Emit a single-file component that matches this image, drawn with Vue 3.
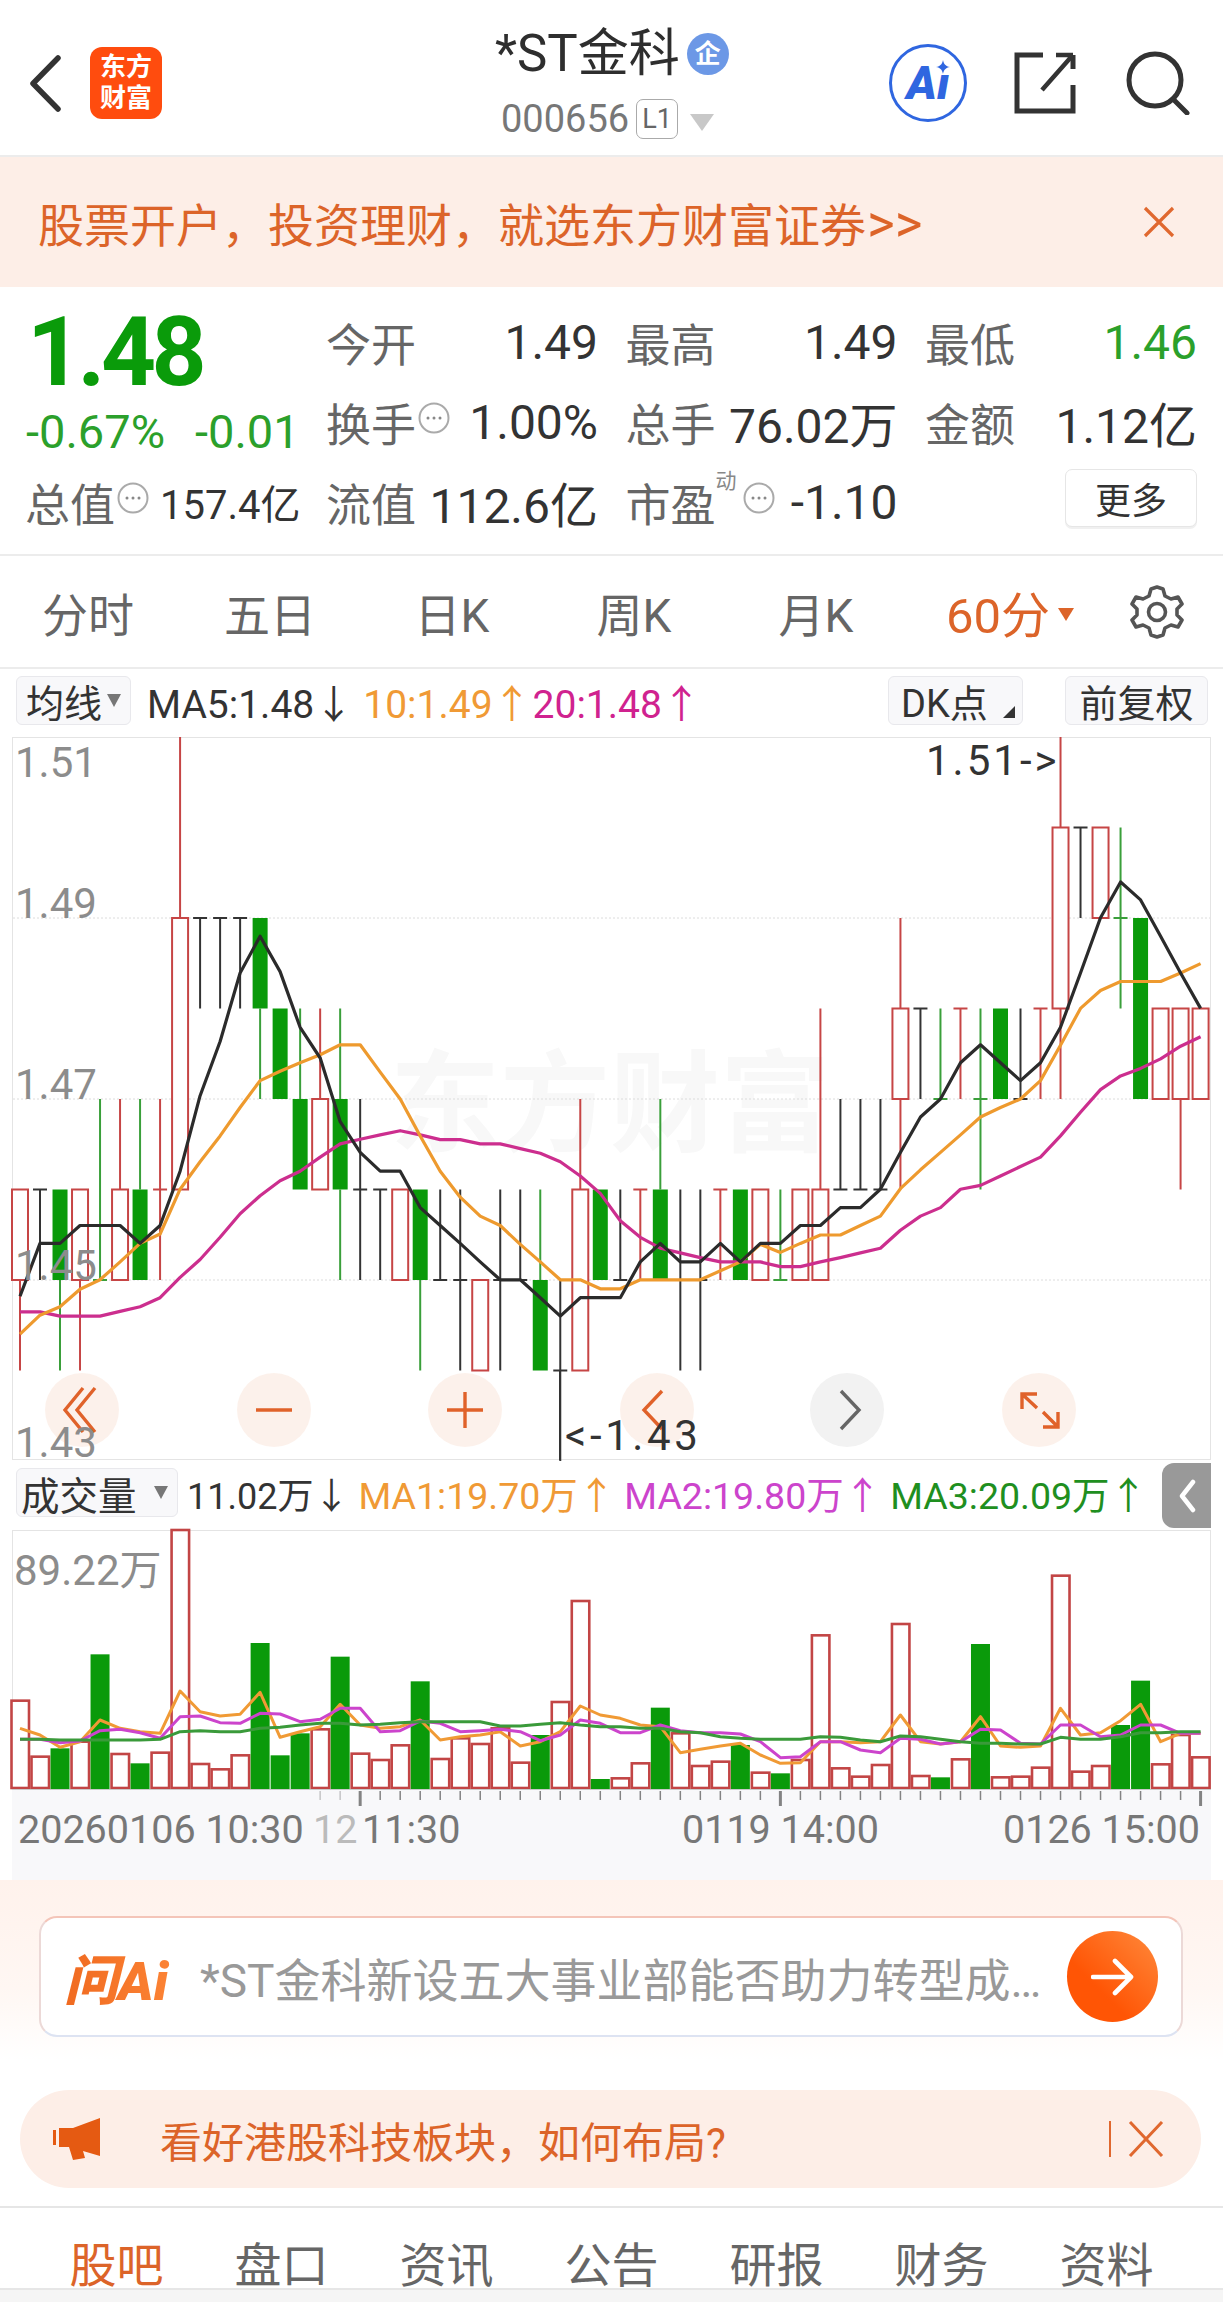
<script setup>
const Y0 = 918, PX = 9050
const py = p => Y0 + (1.49 - p) * PX
const cx = i => 20 + i * 20.01
const ya = z => 730 + z / 2.119
const yv = z => 1460 + z / 3

// bodies: kind, top, bottom, high, low — dojis: colour, dash level, high, low
const raw = [
  ['r',1.46,1.45,1.46,1.44],['dk',1.46,1.46,1.45],['g',1.46,1.45,1.46,1.44],['r',1.46,1.45,1.46,1.44],
  ['dg',1.45,1.47,1.45],['r',1.46,1.45,1.47,1.45],['g',1.46,1.45,1.47,1.45],['dr',1.46,1.47,1.45],
  ['r',1.49,1.46,1.51,1.46],['dk',1.49,1.49,1.48],['dk',1.49,1.49,1.48],['dk',1.49,1.49,1.48],
  ['g',1.49,1.48,1.49,1.47],['g',1.48,1.47,1.48,1.47],['g',1.47,1.46,1.48,1.46],['r',1.47,1.46,1.48,1.46],
  ['g',1.47,1.46,1.48,1.45],['dk',1.46,1.47,1.45],['dk',1.46,1.46,1.45],['r',1.46,1.45,1.46,1.45],
  ['g',1.46,1.45,1.46,1.44],['dk',1.45,1.46,1.45],['dk',1.45,1.46,1.44],['r',1.45,1.44,1.45,1.44],
  ['dk',1.45,1.46,1.44],['dk',1.45,1.46,1.45],['g',1.45,1.44,1.46,1.44],['dk',1.44,1.45,1.43],
  ['r',1.46,1.44,1.47,1.44],['g',1.46,1.45,1.46,1.45],['dk',1.45,1.46,1.45],['dr',1.46,1.46,1.45],
  ['g',1.46,1.45,1.47,1.45],['dk',1.45,1.46,1.44],['dk',1.45,1.46,1.44],['dr',1.46,1.46,1.45],
  ['g',1.46,1.45,1.46,1.45],['r',1.46,1.45,1.46,1.45],['dg',1.45,1.46,1.45],['r',1.46,1.45,1.46,1.45],
  ['r',1.46,1.45,1.48,1.45],['dk',1.46,1.47,1.46],['dk',1.46,1.47,1.46],['dk',1.46,1.47,1.46],
  ['r',1.48,1.47,1.49,1.46],['dk',1.48,1.48,1.47],['dg',1.47,1.48,1.47],['dr',1.48,1.48,1.47],
  ['dg',1.47,1.48,1.46],['g',1.48,1.47,1.48,1.47],['dk',1.47,1.48,1.47],['dr',1.48,1.48,1.47],
  ['r',1.50,1.48,1.51,1.47],['dk',1.50,1.50,1.49],['r',1.50,1.49,1.50,1.49],['dg',1.49,1.50,1.48],
  ['g',1.49,1.47,1.49,1.47],['r',1.48,1.47,1.48,1.47],['r',1.48,1.47,1.48,1.46],['r',1.48,1.47,1.48,1.47]
]
const colors = { dk: '#333333', dg: '#3a9f3a', dr: '#c64545' }
const candles = raw.map((c, i) => {
  const x = cx(i)
  if (c[0] === 'r' || c[0] === 'g') {
    return { i, x, kind: c[0], top: py(c[1]), bot: py(c[2]), high: py(c[3]), low: py(c[4]), stroke: c[0] === 'r' ? '#c64545' : '#3a9f3a' }
  }
  return { i, x, kind: 'd', dash: py(c[1]), high: py(c[2]), low: py(c[3]), stroke: colors[c[0]] }
})

const ma5 = [1200,1088,1088,1050,1050,1050,1088,1050,935,775,660,515,437,512,630,695,830,895,935,935,1012,1050,1088,1127,1165,1165,1203,1242,1203,1203,1203,1127,1088,1127,1127,1088,1127,1088,1088,1050,1050,1012,1012,973,895,820,782,705,667,705,743,705,630,515,398,322,360,437,515,590]
const ma10 = [1280,1240,1222,1185,1165,1127,1088,1068,973,915,860,800,743,723,705,688,667,667,725,782,860,935,990,1030,1050,1090,1127,1165,1165,1184,1184,1165,1165,1165,1165,1146,1127,1090,1107,1088,1070,1070,1050,1030,972,932,895,858,820,800,782,743,668,590,552,533,533,533,515,495]
const ma20 = [1233,1233,1242,1242,1242,1232,1222,1203,1160,1122,1075,1025,987,955,935,905,877,867,858,849,858,868,868,877,877,887,897,915,945,982,1040,1075,1098,1108,1118,1127,1127,1127,1137,1137,1127,1118,1108,1098,1060,1030,1012,973,965,945,925,905,860,810,762,733,717,697,670,650]
const pts = (arr, fy) => arr.map((z, i) => `${cx(i).toFixed(1)},${fy(z).toFixed(1)}`).join(' ')
const priceLines = [
  { c: '#cc2e8e', p: pts(ma20, ya) },
  { c: '#ee9a2e', p: pts(ma10, ya) },
  { c: '#2b2b2b', p: pts(ma5, ya) }
]

const volTop = [722,890,865,845,583,882,910,878,210,912,928,886,549,886,820,808,590,881,900,856,664,897,835,852,805,908,825,726,423,957,955,910,743,820,918,905,855,938,940,900,526,925,950,915,492,948,952,898,552,952,950,923,347,935,918,795,662,913,825,892]
const volGreen = new Set([2,4,6,12,13,14,16,20,26,29,32,36,38,46,48,55,56])
const vols = volTop.map((z, i) => ({ i, x: cx(i), y: yv(z), green: volGreen.has(i) }))
const vm1 = [805,825,862,845,780,805,815,820,693,755,768,763,697,832,815,800,733,795,805,800,780,840,830,825,815,858,845,815,738,765,775,795,800,878,868,858,850,885,910,908,845,845,848,845,765,845,852,845,770,858,862,858,745,825,818,782,733,845,820,820]
const vm2 = [838,838,848,843,812,808,818,835,770,768,788,790,760,762,785,778,745,745,815,812,783,790,815,812,808,815,842,825,780,790,818,818,795,812,818,818,822,845,893,890,845,845,870,878,835,838,852,845,808,810,850,852,795,795,830,825,795,795,820,820]
const vm3 = [838,838,840,840,840,840,840,838,815,812,815,815,805,802,795,790,790,795,793,788,785,785,785,785,798,798,793,788,795,800,800,805,805,815,818,830,835,838,838,838,830,832,840,845,828,830,838,845,850,850,852,852,832,838,838,830,818,818,815,815]
const volLines = [
  { c: '#f09a35', p: pts(vm1, yv) },
  { c: '#cc44cc', p: pts(vm2, yv) },
  { c: '#3a9a3a', p: pts(vm3, yv) }
]

const ticks = Array.from({ length: 45 }, (_, k) => {
  const i = k + 15
  const big = i === 17 || i === 38 || i === 59
  return { i, x: cx(i), h: big ? 15 : 9, w: big ? 3 : 1.5, o: i < 17 ? 0.35 : 0.8 }
})

const gridY = [py(1.49), py(1.47), py(1.45)]
const axis = [
  { t: '1.51', y: 777 }, { t: '1.49', y: 918 }, { t: '1.47', y: 1099 }, { t: '1.45', y: 1280 }, { t: '1.43', y: 1457 }
]
const navX = [82, 274, 465, 657, 1039]

const tabs = ['分时', '五日', '日K', '周K', '月K']
const bottom = ['盘口', '资讯', '公告', '研报', '财务', '资料']
</script>

<template>
  <div class="page">
    <header class="head">
      <svg class="back" viewBox="0 0 33 57"><path d="M29 3 4 28.5 29 54" fill="none" stroke="#333" stroke-width="5.5" stroke-linecap="round" stroke-linejoin="round"/></svg>
      <div class="logo"><span>东方</span><span>财富</span></div>
      <div class="head-c">
        <div class="title">*ST金科<span class="qi">企</span></div>
        <div class="code">000656<span class="l1">L1</span><i class="tri"></i></div>
      </div>
      <div class="head-r">
        <div class="ai">Aı<svg class="star" viewBox="0 0 16 16"><path d="M8 0c1 5 3 7 8 8-5 1-7 3-8 8-1-5-3-7-8-8 5-1 7-3 8-8z" fill="#2f66e0"/></svg></div>
        <svg class="ic-share" viewBox="0 0 62 62"><path d="M29 3H3v56h56V33M59 17V3" fill="none" stroke="#333" stroke-width="5"/><path d="M28 38 58 4M42 3h17" fill="none" stroke="#333" stroke-width="4.5"/></svg>
        <svg class="ic-search" viewBox="0 0 64 64"><circle cx="29" cy="29" r="26" fill="none" stroke="#333" stroke-width="5"/><path d="M47 48 61 62" stroke="#333" stroke-width="5" stroke-linecap="round"/></svg>
      </div>
    </header>

    <div class="banner">
      <span>股票开户，投资理财，就选东方财富证券<b class="gt">&gt;&gt;</b></span>
      <svg class="x" viewBox="0 0 32 32"><path d="M2 2l28 28M30 2 2 30" stroke="#e0682f" stroke-width="3.2"/></svg>
    </div>

    <section class="stats">
      <div class="quote">
        <div class="price">1.48</div>
        <div class="chg"><span>-0.67%</span><span>-0.01</span></div>
        <div class="total">
          <span class="lb">总值</span>
          <svg class="dot" viewBox="0 0 32 32"><circle cx="16" cy="16" r="14.5" fill="none" stroke="#aaa" stroke-width="2"/><path d="M10 16h.01M16 16h.01M22 16h.01" stroke="#888" stroke-width="3" stroke-linecap="round"/></svg>
          <span class="total-v">157.4亿</span>
        </div>
      </div>
      <div class="grid">
        <div class="cell"><span class="lb">今开</span><span class="val">1.49</span></div>
        <div class="cell"><span class="lb">最高</span><span class="val">1.49</span></div>
        <div class="cell"><span class="lb">最低</span><span class="val up">1.46</span></div>
        <div class="cell">
          <span class="lb">换手<svg class="dot" viewBox="0 0 32 32"><circle cx="16" cy="16" r="14.5" fill="none" stroke="#aaa" stroke-width="2"/><path d="M10 16h.01M16 16h.01M22 16h.01" stroke="#888" stroke-width="3" stroke-linecap="round"/></svg></span>
          <span class="val">1.00%</span>
        </div>
        <div class="cell"><span class="lb">总手</span><span class="val">76.02万</span></div>
        <div class="cell"><span class="lb">金额</span><span class="val">1.12亿</span></div>
        <div class="cell"><span class="lb">流值</span><span class="val">112.6亿</span></div>
        <div class="cell">
          <span class="lb">市盈<sup class="sup">动</sup><svg class="dot" viewBox="0 0 32 32"><circle cx="16" cy="16" r="14.5" fill="none" stroke="#aaa" stroke-width="2"/><path d="M10 16h.01M16 16h.01M22 16h.01" stroke="#888" stroke-width="3" stroke-linecap="round"/></svg></span>
          <span class="val">-1.10</span>
        </div>
        <div class="cell end"><button class="more">更多</button></div>
      </div>
    </section>

    <nav class="tabs">
      <span v-for="t in tabs" :key="t" class="tab">{{ t }}</span>
      <span class="tab on">60分<i class="tri-o"></i></span>
      <svg class="gear" viewBox="0 0 54 56">
        <path d="M27 3l6 2 2 7 6 3 7-2 4 7-5 5v6l5 5-4 7-7-2-6 3-2 7-6 2-6-2-2-7-6-3-7 2-4-7 5-5v-6l-5-5 4-7 7 2 6-3 2-7z" fill="none" stroke="#555" stroke-width="3.6" stroke-linejoin="round"/>
        <circle cx="27" cy="28" r="8.5" fill="none" stroke="#555" stroke-width="3.6"/>
      </svg>
    </nav>

    <div class="legend">
      <span class="chip c1">均线<i class="tri-g"></i></span>
      <span class="lg k ma5">MA5:1.48↓</span>
      <span class="lg o ma10">10:1.49↑</span>
      <span class="lg m ma20">20:1.48↑</span>
      <span class="chip c2">DK点<i class="corner"></i></span>
      <span class="chip c3">前复权</span>
    </div>

    <svg class="price-chart" width="1199" height="723" viewBox="12 737 1199 723">
      <rect x="12.5" y="737.5" width="1198" height="722" fill="#fff" stroke="#e4e4e4"/>
      <text x="390" y="1143" class="wm">东方财富</text>
      <line v-for="y in gridY" :key="y" x1="13" x2="1210" :y1="y" :y2="y" stroke="#dcdcdc" stroke-dasharray="2 2"/>
      <g v-for="c in candles" :key="c.i">
        <template v-if="c.kind === 'd'">
          <line :x1="c.x" :x2="c.x" :y1="c.high" :y2="c.low" :stroke="c.stroke" stroke-width="2"/>
          <line :x1="c.x - 7" :x2="c.x + 7" :y1="c.dash" :y2="c.dash" :stroke="c.stroke" stroke-width="2"/>
        </template>
        <template v-else>
          <line :x1="c.x" :x2="c.x" :y1="c.high" :y2="c.top" :stroke="c.stroke" stroke-width="2"/>
          <line :x1="c.x" :x2="c.x" :y1="c.bot" :y2="c.low" :stroke="c.stroke" stroke-width="2"/>
          <rect v-if="c.kind === 'r'" :x="c.x - 8" :y="c.top" width="16" :height="c.bot - c.top" fill="#fff" stroke="#c64545" stroke-width="2"/>
          <rect v-else :x="c.x - 7.5" :y="c.top" width="15" :height="c.bot - c.top" fill="#0a9a0a"/>
        </template>
      </g>
      <polyline v-for="l in priceLines" :key="l.c" :points="l.p" fill="none" :stroke="l.c" stroke-width="3.2" stroke-linejoin="round"/>
      <line x1="560" x2="560" y1="1370" y2="1460" stroke="#333" stroke-width="2"/>
      <circle v-for="x in navX" :key="x" :cx="x" cy="1410" r="37" fill="#fcefe8" fill-opacity="0.88"/>
      <circle cx="847" cy="1410" r="37" fill="#f2f2f2"/>
      <g fill="none" stroke="#e0622a" stroke-width="3.4">
        <path d="M83 1388l-18 22 18 22M95 1388l-18 22 18 22"/>
        <path d="M256 1410h36"/>
        <path d="M447 1410h36M465 1392v36"/>
        <path d="M662 1391l-18 19 18 19"/>
        <path d="M1022 1394l15 14M1037 1394h-15v15M1043 1412l15 15M1043 1427h15v-15"/>
      </g>
      <path d="M841 1391l18 19-18 19" fill="none" stroke="#666" stroke-width="3.4"/>
      <text v-for="a in axis" :key="a.t" x="15" :y="a.y" class="ax">{{ a.t }}</text>
      <text x="565" y="1450" class="mk mk-l">&lt;-1.43</text>
      <text x="926" y="775" class="mk">1.51-&gt;</text>
    </svg>

    <div class="legend vol-lg">
      <span class="chip c4">成交量<i class="tri-g"></i></span>
      <span class="lg k">11.02万↓</span>
      <span class="lg o wide">MA1:19.70万↑</span>
      <span class="lg p wide">MA2:19.80万↑</span>
      <span class="lg g wide">MA3:20.09万↑</span>
      <span class="pull"><svg viewBox="0 0 18 34" width="18" height="34"><path d="M15 3 4 17l11 14" fill="none" stroke="#fff" stroke-width="4.5" stroke-linecap="round" stroke-linejoin="round"/></svg></span>
    </div>

    <svg class="vol-chart" width="1199" height="259" viewBox="12 1530 1199 259">
      <rect x="12.5" y="1530.5" width="1198" height="260" fill="#fff" stroke="#e4e4e4"/>
      <template v-for="v in vols" :key="v.i">
        <rect v-if="v.green" :x="v.x - 9.5" :y="v.y" width="19" :height="1789 - v.y" fill="#0a9a0a"/>
        <rect v-else :x="v.x - 8.5" :y="v.y" width="17.5" :height="1788 - v.y" fill="#fff" stroke="#c24545" stroke-width="2.6"/>
      </template>
      <polyline v-for="l in volLines" :key="l.c" :points="l.p" fill="none" :stroke="l.c" stroke-width="3" stroke-linejoin="round"/>
      <text x="14" y="1585" class="ax vt">89.22万</text>
    </svg>

    <svg class="time" width="1199" height="91" viewBox="12 1789 1199 91">
      <rect x="12" y="1789" width="1199" height="91" fill="#f8f8fa"/>
      <rect x="12" y="1789" width="1199" height="1" fill="#c9c9c9"/>
      <line v-for="t in ticks" :key="t.i" :x1="t.x" :x2="t.x" y1="1791" :y2="1791 + t.h" stroke="#666" :stroke-width="t.w" :opacity="t.o"/>
      <text x="18" y="1843" class="tm">20260106 10:30</text>
      <text x="313" y="1843" class="tm faded">12</text>
      <text x="362" y="1843" class="tm">11:30</text>
      <text x="682" y="1843" class="tm">0119 14:00</text>
      <text x="1003" y="1843" class="tm">0126 15:00</text>
    </svg>

    <section class="ask">
      <div class="ask-card">
        <span class="ask-logo">问Ai</span>
        <span class="ask-text">*ST金科新设五大事业部能否助力转型成…</span>
        <span class="ask-go"><svg viewBox="0 0 44 38" width="44" height="38"><path d="M2 19h38M24 3l16 16-16 16" fill="none" stroke="#fff" stroke-width="4.6" stroke-linecap="round" stroke-linejoin="round"/></svg></span>
      </div>
    </section>

    <section class="notice-wrap">
      <div class="notice">
        <svg class="horn" viewBox="0 0 48 42"><path d="M0 12h3v15H0zM6 10h14L47 0v38L30 33l2 7-12 2-4-13H6z" fill="#e55a12"/></svg>
        <span class="notice-t">看好港股科技板块，如何布局?</span>
        <i class="sep"></i>
        <svg class="x2" viewBox="0 0 36 36"><path d="M2 1l32 34M34 1 2 35" stroke="#e0682f" stroke-width="3"/></svg>
      </div>
    </section>

    <nav class="btabs">
      <span class="bt on">股吧</span>
      <span v-for="b in bottom" :key="b" class="bt">{{ b }}</span>
    </nav>
    <div class="foot"></div>
  </div>
</template>

<style>
html, body { margin: 0; background: #fff; }
</style>

<style scoped>
.page {
  width: 1223px; height: 2302px; overflow: hidden; background: #fff; color: #333;
  font-family: Roboto, "Noto Sans CJK SC", "Noto Sans", sans-serif;
}
.page svg { display: block; }
i { display: inline-block; font-style: normal; }

.head { height: 155px; display: flex; align-items: flex-start; border-bottom: 2px solid #ececec; }
.back { width: 33px; height: 57px; margin: 55px 0 0 29px; flex: none; }
.logo {
  width: 72px; height: 72px; margin: 47px 0 0 28px; border-radius: 12px; background: #ff4c0e; color: #fff;
  display: flex; flex-direction: column; align-items: center; justify-content: center;
  font-size: 26px; line-height: 31px; font-weight: 700; flex: none;
}
.head-c { margin-left: 333px; width: 250px; flex: none; }
.title { margin-top: 26px; height: 56px; font-size: 51px; line-height: 56px; display: flex; align-items: center; white-space: nowrap; color: #2e2e2e; }
.qi {
  width: 42px; height: 42px; margin-left: 7px; border-radius: 50%; background: #6c98e6; color: #fff;
  font-size: 26px; line-height: 42px; text-align: center; font-weight: 700;
}
.code { margin-top: 17px; margin-left: 6px; height: 40px; display: flex; align-items: center; font-size: 38px; color: #777; }
.l1 { margin-left: 7px; width: 40px; height: 38px; border: 1.5px solid #aaa; border-radius: 7px; font-size: 27px; line-height: 38px; text-align: center; color: #666; }
.tri { margin-left: 12px; margin-top: 6px; border: 12px solid transparent; border-top: 17px solid #c8c8c8; border-bottom: 0; }
.head-r { margin-left: auto; display: flex; align-items: center; height: 166px; padding-right: 33px; }
.ai {
  width: 72px; height: 72px; border: 3.5px solid #2f66e0; border-radius: 50%; color: #2f66e0; position: relative;
  font-size: 46px; line-height: 72px; text-align: center; font-weight: 900; font-style: italic;
}
.star { position: absolute; right: 14px; top: 13px; width: 14px; height: 14px; }
.ic-share { width: 62px; height: 62px; margin-left: 47px; }
.ic-search { width: 64px; height: 64px; margin-left: 50px; }

.banner {
  height: 130px; background: #fdeee7; display: flex; align-items: center; justify-content: space-between;
  padding: 0 48px 0 38px; font-size: 46px; color: #dc6429; white-space: nowrap;
}
.gt { font-weight: 400; font-size: 53px; letter-spacing: 0; margin-left: 1px; line-height: 46px; }
.x { width: 32px; height: 32px; }

.stats { height: 269px; display: flex; box-sizing: border-box; padding-top: 15px; border-bottom: 2px solid #ececec; }
.quote { width: 326px; padding-left: 25px; box-sizing: border-box; flex: none; }
.price { height: 100px; font-size: 96px; line-height: 100px; font-weight: 700; color: #0a9b0a; letter-spacing: -4.5px; margin-left: 2px; }
.chg { height: 60px; display: flex; gap: 30px; font-size: 47px; line-height: 60px; color: #2ba02b; white-space: nowrap; margin-left: 1px; }
.total { height: 80px; display: flex; align-items: center; white-space: nowrap; }
.total-v { font-size: 40px; color: #333; margin-left: 11px; }
.lb { font-size: 45px; color: #666; display: inline-flex; align-items: center; white-space: nowrap; position: relative; }
.dot { width: 32px; height: 32px; flex: none; margin-left: 2px; margin-top: -8px; }
.sup { position: absolute; left: 90px; top: 0; font-size: 21px; color: #888; line-height: 22px; }
.sup + .dot { margin-left: 27px; }
.grid { display: grid; grid-template-columns: repeat(3, 272px); grid-auto-rows: 80px; column-gap: 27.5px; }
.cell { display: flex; align-items: center; justify-content: space-between; white-space: nowrap; }
.cell.end { justify-content: flex-end; }
.val { font-size: 48px; color: #333; }
.val.up { color: #2ba02b; }
.more { width: 132px; height: 58px; background: #fff; border: 1.5px solid #e6e6e6; border-radius: 7px; font: inherit; font-size: 36px; color: #333; padding: 0; box-shadow: 0 2px 0 #f0f0f0; margin-top: -8px; }

.tabs { height: 111px; display: flex; align-items: center; border-bottom: 2px solid #ececec; margin-left: -3px; }
.tab { width: 182px; text-align: center; font-size: 46px; color: #666; flex: none; white-space: nowrap; box-sizing: border-box; }
.tab.on { color: #dc6429; font-size: 49px; padding-left: 24px; }
.tri-o { margin-left: 8px; vertical-align: 12px; border: 8px solid transparent; border-top: 13px solid #dc6429; border-bottom: 0; }
.gear { width: 54px; height: 56px; margin-left: 41px; flex: none; }

.legend { height: 68px; display: flex; align-items: center; font-size: 36px; white-space: nowrap; position: relative; padding-bottom: 5px; box-sizing: border-box; }
.chip {
  background: #f8f8fa; border: 1.5px solid #e8e8ec; border-radius: 6px; height: 49px; display: flex; align-items: center;
  justify-content: center; box-sizing: border-box; color: #333; font-size: 38px; flex: none;
}
.c1 { width: 115px; margin-left: 16px; }
.c2 { width: 135px; margin-left: auto; position: relative; justify-content: flex-start; padding-left: 12px; }
.c3 { width: 143px; margin: 0 15px 0 42px; }
.c4 { width: 162px; margin-left: 16px; justify-content: flex-start; padding-left: 4px; font-size: 38.5px; }
.tri-g { margin-left: 5px; border: 7px solid transparent; border-top: 13px solid #777; border-bottom: 0; }
.c4 .tri-g { margin-left: 17px; }
.corner { position: absolute; right: 7px; bottom: 6px; border-style: solid; border-width: 0 0 12px 12px; border-color: transparent transparent #333 transparent; }
.lg { margin-left: 17px; }
.ma5, .ma10, .ma20 { font-size: 39px; }
.ma5 { margin-left: 16px; }
.ma10 { margin-left: 10px; }
.ma20 { margin-left: 1px; }
.lg.k { color: #333; }
.lg.o { color: #f09a35; }
.lg.m { color: #d0228f; }
.lg.p { color: #cc44cc; }
.lg.g { color: #1f8f1f; }
.price-chart, .vol-chart, .time { margin-left: 12px; overflow: visible; }
.wm { font-size: 110px; font-weight: 700; fill: #f8f8f8; }
.ax { font-size: 42px; fill: #8c8c8c; }
.vt { font-size: 42px; }
.mk { font-size: 42px; fill: #333; letter-spacing: 3px; }
.mk-l { letter-spacing: 3.6px; }
.tm { font-size: 39.5px; fill: #777; }
.faded { fill: #bbb; }

.vol-lg { height: 70px; }
.vol-lg .k { margin-left: 9px; }
.vol-lg .wide { font-size: 37.5px; margin-left: 9px; }
.pull {
  position: absolute; left: 1162px; top: 3px; width: 49px; height: 65px; background: #999; border-radius: 12px 0 0 12px;
  display: flex; align-items: center; justify-content: center;
}

.ask { height: 180px; background: linear-gradient(#fff2ec 0%, #fff7f3 60%, #fff 100%); box-sizing: border-box; padding: 36px 40px 0 39px; }
.ask-card {
  height: 121px; border-radius: 18px; background: #fff; box-sizing: border-box; border: 2px solid #ecd9d7;
  border-top-color: #f4c5b9; border-bottom-color: #dde3f2; display: flex; align-items: center; padding: 0 23px;
}
.ask-logo {
  font-size: 54px; font-weight: 900; font-style: italic; width: 136px; flex: none; white-space: nowrap;
  background: linear-gradient(90deg, #f06a20, #ff8a3a); -webkit-background-clip: text; background-clip: text; color: transparent;
}
.ask-text { font-size: 46px; color: #999; white-space: nowrap; width: 862px; flex: none; overflow: hidden; }
.ask-go {
  width: 91px; height: 91px; border-radius: 50%; background: linear-gradient(225deg, #ff8a3c, #ff5505 65%);
  display: flex; align-items: center; justify-content: center; margin-left: auto; flex: none;
}

.notice-wrap { height: 148px; box-sizing: border-box; padding: 30px 22px 0 20px; border-bottom: 2px solid #e6e6e6; }
.notice { height: 98px; border-radius: 49px; background: #fdeee7; display: flex; align-items: center; padding-left: 33px; }
.horn { width: 48px; height: 42px; flex: none; }
.notice-t { margin-left: 59px; font-size: 42px; color: #dc6429; white-space: nowrap; width: 949px; flex: none; }
.sep { width: 1.5px; height: 36px; background: #e0682f; flex: none; }
.x2 { width: 36px; height: 36px; margin-left: 17px; flex: none; }

.btabs { height: 80px; display: flex; padding: 27px 0 0 34px; align-items: center; box-sizing: border-box; }
.bt { width: 165px; text-align: center; font-size: 47px; color: #666; flex: none; }
.bt.on { color: #dc6429; }
.foot { height: 12px; background: #f5f5f5; border-top: 2px solid #e6e6e6; }
</style>
